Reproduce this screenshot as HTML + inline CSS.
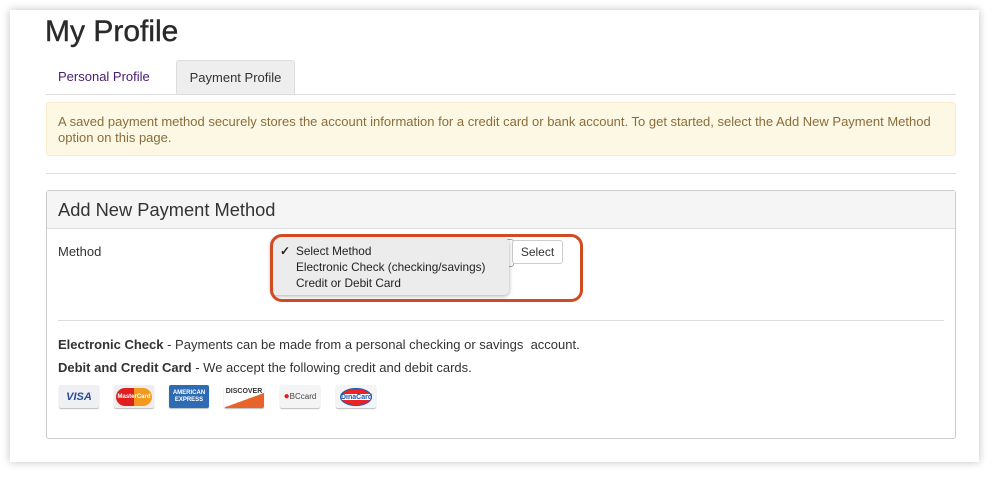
<!DOCTYPE html>
<html><head><style>
body{margin:0;width:999px;height:482px;background:#fff;font-family:"Liberation Sans",Arial,sans-serif;position:relative;overflow:hidden;color:#333}
.card{position:absolute;left:10px;top:10px;width:969px;height:452px;background:#fff;box-shadow:0 0 8px rgba(0,0,0,.25)}
.a{position:absolute}
.c{position:absolute;top:385px;width:40px;height:23px;font-size:9px;font-weight:bold;display:flex;align-items:center;justify-content:center;border-radius:2px;box-shadow:0 1px 1px #bbb}
</style></head><body>
<div class="card"></div>
<div class="a" style="left:45px;top:15px;font-size:30px;color:#2a2a2a;-webkit-text-stroke:0.4px #2a2a2a">My Profile</div>
<div class="a" style="left:58px;top:69px;font-size:13px;color:#4b1a72">Personal Profile</div>
<div class="a" style="left:176px;top:60px;width:119px;height:34px;background:#eee;border:1px solid #ddd;border-bottom:none;border-radius:3px 3px 0 0;box-sizing:border-box;font-size:13px;color:#333;text-align:center;line-height:33px">Payment Profile</div>
<div class="a" style="left:46px;top:94px;width:910px;height:1px;background:#ddd"></div>
<div class="a" style="left:46px;top:102px;width:910px;height:54px;background:#fcf8e3;border:1px solid #faebcc;box-sizing:border-box;border-radius:3px;padding:11px 11px;font-size:13px;line-height:16px;color:#8a6d3b">A saved payment method securely stores the account information for a credit card or bank account. To get started, select the Add New Payment Method option on this page.</div>
<div class="a" style="left:46px;top:173px;width:910px;height:1px;background:#ddd"></div>
<div class="a" style="left:46px;top:190px;width:910px;height:249px;border:1px solid #ccc;box-sizing:border-box;border-radius:3px"></div>
<div class="a" style="left:47px;top:191px;width:908px;height:38px;background:#f5f5f5;border-bottom:1px solid #ddd;font-size:18.3px;line-height:38px;padding-left:11px;box-sizing:border-box;color:#333">Add New Payment Method</div>
<div class="a" style="left:58px;top:244px;font-size:13px">Method</div>
<div class="a" style="left:500px;top:239px;width:12px;height:26px;border:1px solid #8ab;border-radius:3px"></div>
<div class="a" style="left:512px;top:240px;width:51px;height:24px;border:1px solid #ccc;border-radius:3px;box-sizing:border-box;font-size:12px;text-align:center;line-height:22px;background:#fff">Select</div>
<div class="a" style="left:271px;top:238px;width:238px;height:57px;background:#ececec;border-radius:5px;box-shadow:0 1px 4px rgba(0,0,0,.35);font-size:11.8px;line-height:16px;color:#222">
<div style="position:absolute;left:9px;top:5px;font-weight:bold">✓</div>
<div style="position:absolute;left:25px;top:5px">Select Method<br>Electronic Check (checking/savings)<br>Credit or Debit Card</div></div>
<div class="a" style="left:270px;top:234px;width:313px;height:68px;border:3px solid #d24a22;border-radius:12px;box-sizing:border-box"></div>
<div class="a" style="left:58px;top:320px;width:886px;height:1px;background:#ddd"></div>
<div class="a" style="left:58px;top:337px;font-size:13px"><b>Electronic Check</b> - Payments can be made from a personal checking or savings&nbsp; account.</div>
<div class="a" style="left:58px;top:360px;font-size:13px"><b>Debit and Credit Card</b> - We accept the following credit and debit cards.</div>
<div class="c" style="left:59px;background:#eef0f4;color:#2a4b9b;font-style:italic;font-size:11px">VISA</div>
<div class="c" style="left:114px;background:#eee"><span style="display:block;width:36px;height:18px;border-radius:9px;background:linear-gradient(90deg,#e02020 50%,#f39a1e 50%);color:#fff;font-size:6px;text-align:center;line-height:18px">MasterCard</span></div>
<div class="c" style="left:169px;background:#2d6cb5;color:#fff;font-size:6px;line-height:7px;text-align:center">AMERICAN<br>EXPRESS</div>
<div class="c" style="left:224px;background:linear-gradient(160deg,#fff 60%,#e8632a 60%);color:#333;font-size:7px;align-items:flex-start;padding-top:3px;box-sizing:border-box">DISCOVER</div>
<div class="c" style="left:280px;background:#f4f4f4;color:#444;font-size:8px;font-weight:normal"><span style="color:#d22;font-size:10px">●</span>BCcard</div>
<div class="c" style="left:336px;background:#f4f4f4"><span style="display:block;width:32px;height:18px;border-radius:50%;color:#1a56b0;font-size:7px;text-align:center;line-height:18px;border:1px solid #1a56b0;box-sizing:border-box;background:linear-gradient(#e22 30%,#fff 30%,#fff 70%,#e22 70%)">DinaCard</span></div>
</body></html>
